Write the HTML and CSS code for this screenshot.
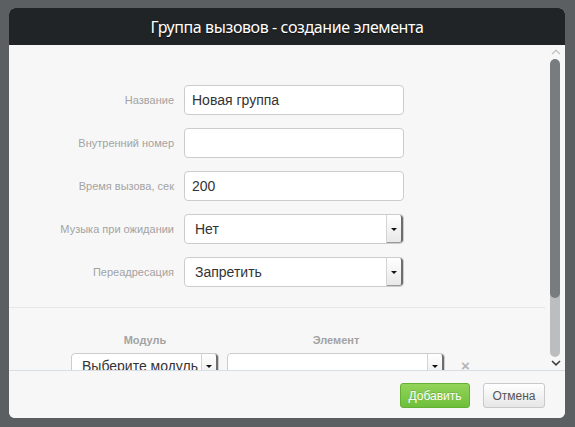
FILE: index.html
```html
<!DOCTYPE html>
<html lang="ru">
<head>
<meta charset="utf-8">
<title>Группа вызовов</title>
<link rel="stylesheet" href="styles.css">
</head>
<body>
<div class="modal">
  <div class="modal-header">Группа вызовов - создание элемента</div>
  <div class="modal-body">
    <div class="content">
      <div class="form">
        <div class="row">
          <label class="lbl">Название</label>
          <div class="field input">Новая группа</div>
        </div>
        <div class="row">
          <label class="lbl">Внутренний номер</label>
          <div class="field input"></div>
        </div>
        <div class="row">
          <label class="lbl">Время вызова, сек</label>
          <div class="field input">200</div>
        </div>
        <div class="row">
          <label class="lbl">Музыка при ожидании</label>
          <div class="field select"><span class="sel-text">Нет</span><span class="sel-btn"><span class="caret"></span></span></div>
        </div>
        <div class="row">
          <label class="lbl">Переадресация</label>
          <div class="field select"><span class="sel-text">Запретить</span><span class="sel-btn"><span class="caret"></span></span></div>
        </div>
      </div>
      <div class="targets">
        <div class="thead">
          <div class="col-mod">Модуль</div>
          <div class="col-el">Элемент</div>
        </div>
        <div class="trow">
          <div class="field select col-mod"><span class="sel-text">Выберите модуль</span><span class="sel-btn"><span class="caret"></span></span></div>
          <div class="field select col-el"><span class="sel-text"></span><span class="sel-btn"><span class="caret"></span></span></div>
          <span class="remove">×</span>
        </div>
      </div>
    </div>
    <div class="scrollbar">
      <svg class="arrow-up" width="10" height="6" viewBox="0 0 10 6"><polyline points="1,5 5,1.2 9,5" fill="none" stroke="#c4c5c7" stroke-width="1.5"/></svg>
      <div class="track"><div class="thumb"></div></div>
      <svg class="arrow-down" width="10" height="6" viewBox="0 0 10 6"><polyline points="1,1 5,4.8 9,1" fill="none" stroke="#3a3d40" stroke-width="1.6"/></svg>
    </div>
  </div>
  <div class="modal-footer">
    <button class="btn btn-ok">Добавить</button>
    <button class="btn btn-cancel">Отмена</button>
  </div>
</div>
</body>
</html>
```

FILE: styles.css
```css
html, body {
  margin: 0;
  padding: 0;
}
body {
  width: 575px;
  height: 427px;
  overflow: hidden;
  background: #5b5f62;
  font-family: "Liberation Sans", Arial, sans-serif;
}
.modal {
  margin: 8px 0 0 9px;
  width: 556px;
  height: 410px;
  border-radius: 6px;
  overflow: hidden;
  background: #f7f7f7;
  display: flex;
  flex-direction: column;
}
.modal-header {
  height: 37px;
  flex: none;
  background: #202427;
  color: #fff;
  font-family: "Noto Sans", "Open Sans", sans-serif;
  font-size: 16px;
  letter-spacing: -0.4px;
  display: flex;
  align-items: center;
  justify-content: center;
  text-shadow: 0 1px 1px rgba(0,0,0,0.6);
}
.modal-body {
  flex: 1;
  position: relative;
  overflow: hidden;
}
.content {
  width: 536px;
}
.form {
  padding-top: 40px;
  padding-bottom: 20px;
  border-bottom: 1px solid #e6e6e6;
  display: flex;
  flex-direction: column;
  gap: 13px;
}
.row {
  display: flex;
  align-items: center;
  height: 30px;
}
.lbl {
  width: 175px;
  text-align: right;
  font-size: 11px;
  color: #a3a3a3;
  padding-right: 10px;
  box-sizing: border-box;
}
.field {
  box-sizing: border-box;
  height: 30px;
  border: 1px solid #cccccc;
  border-radius: 4px;
  background: #fff;
  color: #333;
  font-size: 14px;
  display: flex;
  align-items: center;
  overflow: hidden;
}
.row .field {
  width: 220px;
}
.input {
  padding-left: 7px;
}
.select {
  padding-left: 10px;
}
.sel-text {
  flex: 1;
  white-space: nowrap;
  overflow: hidden;
}
.sel-btn {
  flex: none;
  width: 17px;
  height: 100%;
  box-sizing: border-box;
  border-left: 1px solid #d4d4d4;
  border-right: 2px solid #6e6e6e;
  border-bottom: 1px solid #9a9a9a;
  border-radius: 0 3px 3px 0;
  background: linear-gradient(#ffffff, #e8e8e8);
  display: flex;
  align-items: center;
  justify-content: center;
}
.caret {
  width: 0;
  height: 0;
  border-left: 3px solid transparent;
  border-right: 3px solid transparent;
  border-top: 3px solid #111;
  margin-top: 1px;
}
.targets {
  padding-top: 26px;
}
.thead {
  display: flex;
  gap: 8px;
  padding-left: 62px;
  font-size: 11px;
  font-weight: bold;
  color: #a3a3a3;
  height: 13px;
  line-height: 13px;
}
.thead .col-mod, .thead .col-el {
  text-align: center;
}
.col-mod {
  width: 148px;
}
.col-el {
  width: 218px;
}
.trow {
  margin-top: 6px;
  padding-left: 62px;
  display: flex;
  gap: 8px;
  align-items: flex-start;
}
.trow .field {
  height: 30px;
  align-items: flex-start;
}
.trow .sel-text {
  margin-top: 4px;
  line-height: 16px;
}
.trow .sel-btn .caret {
  margin-top: 0;
  position: relative;
  top: -1px;
}
.remove {
  margin-left: 8px;
  margin-top: 5px;
  color: #b5b5b5;
  font-size: 15px;
  line-height: 16px;
  font-weight: bold;
}
.scrollbar {
  position: absolute;
  top: 0;
  right: 5px;
  width: 10px;
  height: 325px;
}
.arrow-up {
  position: absolute;
  top: 4px;
  left: 1px;
}
.track {
  position: absolute;
  top: 14px;
  left: 0;
  width: 10px;
  height: 298px;
  border-radius: 5px;
  background: #bcbdbf;
  overflow: hidden;
}
.thumb {
  height: 239px;
  background: #797c7f;
  border-radius: 5px;
}
.arrow-down {
  position: absolute;
  top: 315px;
  left: 1px;
}
.modal-footer {
  flex: none;
  height: 48px;
  box-sizing: border-box;
  border-top: 1px solid #d8dee6;
  background: #f7f7f7;
  display: flex;
  justify-content: flex-end;
  align-items: flex-start;
  gap: 13px;
  padding: 12px 20px 0 0;
}
.btn {
  height: 25px;
  border-radius: 3px;
  font-family: "Liberation Sans", Arial, sans-serif;
  font-size: 12px;
  padding: 0;
  cursor: pointer;
}
.btn-ok {
  width: 70px;
  color: #fff;
  border: 1px solid #64b032;
  background: linear-gradient(#93d458, #6ebf3c);
  text-shadow: 0 -1px 0 rgba(0,0,0,0.15);
}
.btn-cancel {
  width: 62px;
  color: #555;
  border: 1px solid #c9c9c9;
  background: linear-gradient(#ffffff, #e6e6e6);
}
```
